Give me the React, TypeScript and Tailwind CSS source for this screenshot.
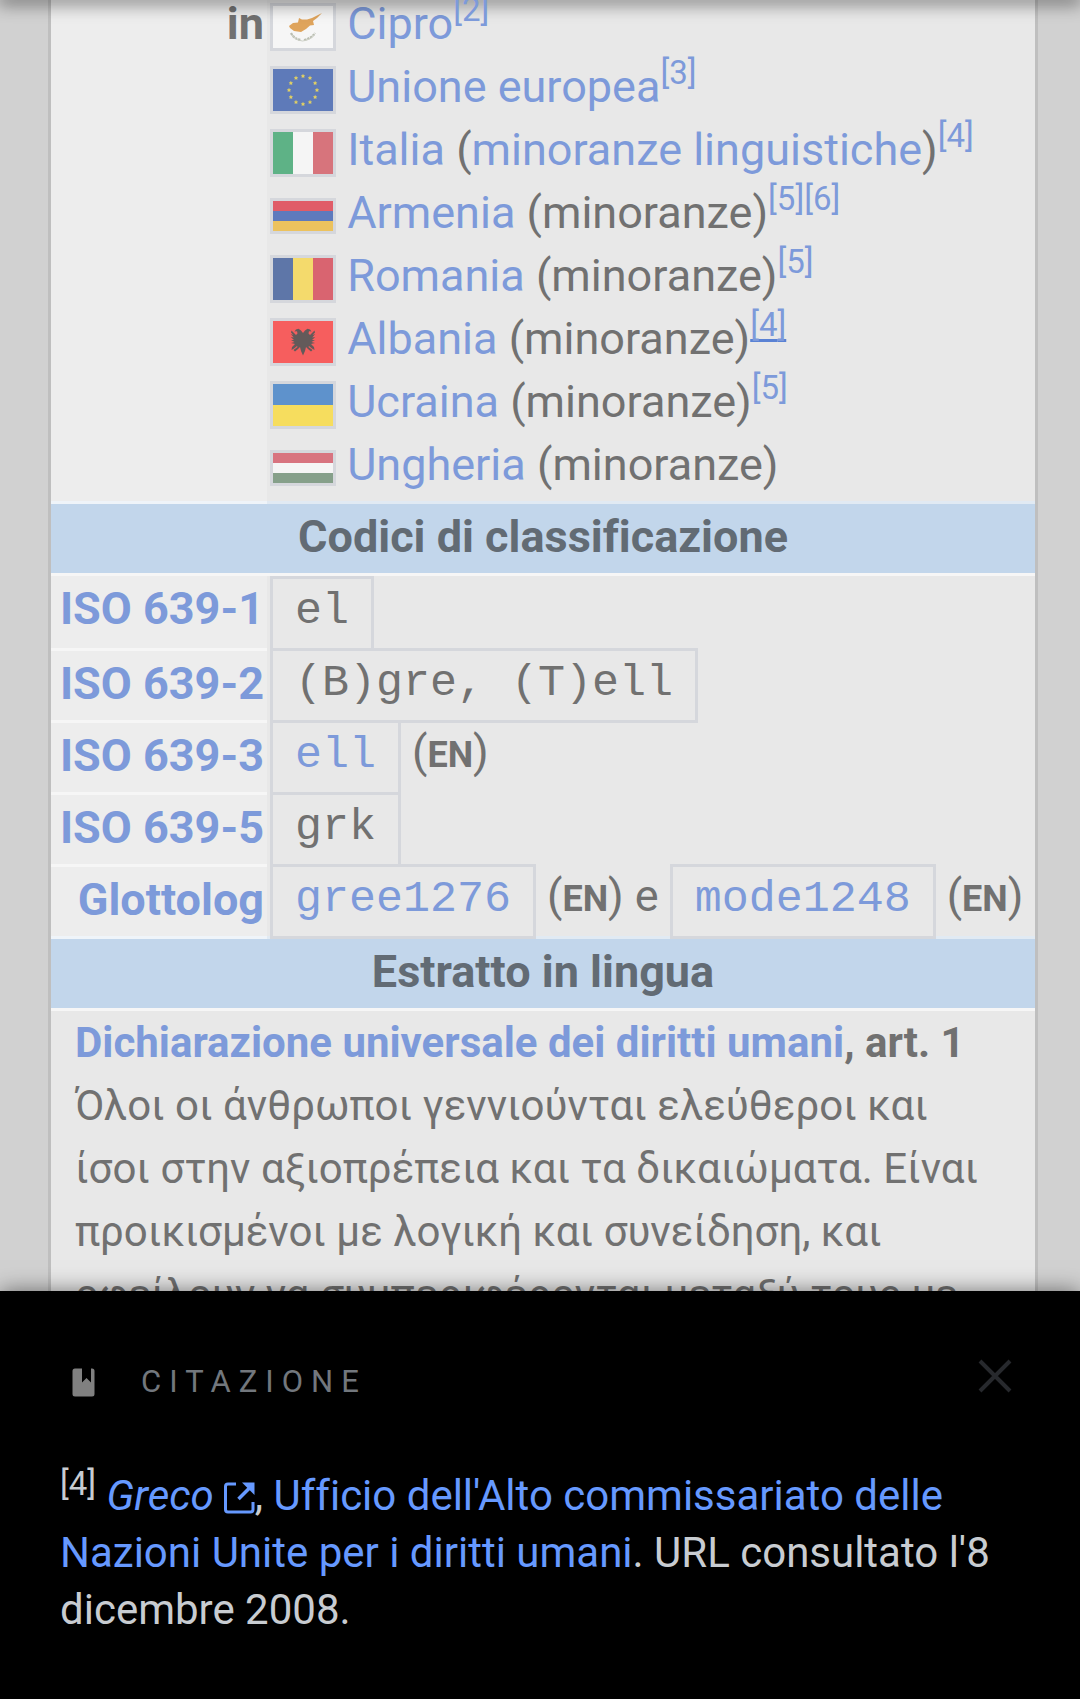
import type { ReactNode } from "react";

const sans = "font-['Roboto','Liberation_Sans',sans-serif] [font-variant-ligatures:none]";

function Frame({ tall = true, children }: { tall?: boolean; children: ReactNode }) {
  return (
    <span className="inline-block border-[3px] border-[#d5d7dc] align-middle leading-none">
      <svg
        className={tall ? "block h-[42px] w-[60px]" : "block h-[30px] w-[60px]"}
        viewBox={tall ? "0 0 60 42" : "0 0 60 30"}
        preserveAspectRatio="none"
        aria-hidden="true"
      >
        {children}
      </svg>
    </span>
  );
}

function Cyprus() {
  return (
    <Frame>
      <rect width="60" height="42" fill="#f6f6f6" />
      <path
        d="M16 20 L20 17 L25 16.5 L26 12 L29 13.5 L34 13.5 L39 12 L44 9.5 L49 7 L44 12 L40 15 L41 19 L37 19.5 L33 23 L28 26 L21 25 L17 22 Z"
        fill="#dfa45c"
      />
      <path d="M18 27 Q21 33 28 34 M31 34 Q39 32 42 27" stroke="#b9bdb0" strokeWidth="2.2" strokeDasharray="2.4 0.8" fill="none" />
      <path d="M19 29 Q22 34 29.500 35 Q38 34 41 29" stroke="#cdd0c6" strokeWidth="1" fill="none" />
    </Frame>
  );
}

function Europe() {
  const stars = Array.from({ length: 12 }, (_, i) => {
    const a = (i * Math.PI) / 6;
    return [30 + 14 * Math.sin(a), 21 - 14 * Math.cos(a)];
  });
  return (
    <Frame>
      <rect width="60" height="42" fill="#5e7ab9" />
      {stars.map(([x, y], i) => (
        <path key={i} transform={`translate(${x} ${y})`} d="M0 -2.300 L0.700 -0.700 L2.200 -0.600 L1.100 0.500 L1.400 2 L0 1.200 L-1.400 2 L-1.100 0.500 L-2.200 -0.600 L-0.700 -0.700 Z" fill="#e3d162" />
      ))}
    </Frame>
  );
}

function Vertical({ colors }: { colors: string[] }) {
  return (
    <Frame>
      {colors.map((c, i) => (
        <rect key={i} x={i * 20} width="20" height="42" fill={c} />
      ))}
    </Frame>
  );
}

function Horizontal({ colors, tall = false }: { colors: string[]; tall?: boolean }) {
  const h = (tall ? 42 : 30) / colors.length;
  return (
    <Frame tall={tall}>
      {colors.map((c, i) => (
        <rect key={i} y={i * h} width="60" height={h} fill={c} />
      ))}
    </Frame>
  );
}

function Albania() {
  const wing =
    "M30 12 L28 9.500 L25.500 7.800 L23 8.500 L21.500 10.500 L24 10.300 L24.500 12.500 L23 14 L18.500 9.500 L18 11.500 L20.500 14 L17.800 13 L20.800 16.500 L17.800 16 L21 19 L18 19 L21.500 21 L18 22 L22 23 L19 26 L18.500 29 L21 27.500 L24 25 L24.500 26 L20.500 29 L22 30.500 L25 28 L27 26 L28 30 L30 34.500 Z";
  return (
    <Frame>
      <rect width="60" height="42" fill="#f65e5e" />
      <path d={wing} fill="#635a5a" />
      <path d={wing} fill="#635a5a" transform="translate(60 0) scale(-1 1)" />
    </Frame>
  );
}

function Link({ children }: { children: ReactNode }) {
  return (
    <a href="#" className="text-[#7d9ada]">
      {children}
    </a>
  );
}

function Ref({ n, active = false }: { n: number; active?: boolean }) {
  return (
    <sup className="top-0 align-[18px] text-[33px]">
      <a
        href="#citazione"
        className={
          active
            ? "text-[#7d9ada] underline decoration-[#5a82d4] decoration-[3px] underline-offset-[3px] [text-decoration-skip-ink:none]"
            : "text-[#7d9ada]"
        }
      >
        [{n}]
      </a>
    </sup>
  );
}

const places: { flag: ReactNode; name: string; note?: ReactNode; refs: number[]; active?: boolean }[] = [
  { flag: <Cyprus />, name: "Cipro", refs: [2] },
  { flag: <Europe />, name: "Unione europea", refs: [3] },
  {
    flag: <Vertical colors={["#5eb286", "#f5f5f5", "#d7747c"]} />,
    name: "Italia",
    note: <Link>minoranze linguistiche</Link>,
    refs: [4],
  },
  { flag: <Horizontal colors={["#e05c68", "#5e7abd", "#ecc25e"]} />, name: "Armenia", note: "minoranze", refs: [5, 6] },
  { flag: <Vertical colors={["#5e76a8", "#f4da6c", "#d96470"]} />, name: "Romania", note: "minoranze", refs: [5] },
  { flag: <Albania />, name: "Albania", note: "minoranze", refs: [4], active: true },
  { flag: <Horizontal tall colors={["#5e92cc", "#f6dd5e"]} />, name: "Ucraina", note: "minoranze", refs: [5] },
  { flag: <Horizontal colors={["#d87480", "#f5f5f5", "#86a08a"]} />, name: "Ungheria", note: "minoranze", refs: [] },
];

function SectionHeader({ children }: { children: ReactNode }) {
  return (
    <tr>
      <th
        colSpan={2}
        className="border-b-[3px] border-[#f6f6f6] bg-[#c2d6eb] p-0 pb-[3px] text-center leading-[66px] font-bold text-[#626b74]"
      >
        {children}
      </th>
    </tr>
  );
}

function Code({ children }: { children: ReactNode }) {
  return (
    <code className="inline-block border-[3px] border-[#d5d7dc] px-[22px] pb-[3px] font-['Liberation_Mono',monospace] text-[45px] leading-[66px] whitespace-pre">
      {children}
    </code>
  );
}

function En() {
  return (
    <span className="leading-none">
      (<span className="text-[36px] font-bold">EN</span>)
    </span>
  );
}

function CodeRow({ label, first = false, last = false, children }: { label: string; first?: boolean; last?: boolean; children: ReactNode }) {
  return (
    <tr>
      <th
        scope="row"
        className={
          "border-b-[3px] bg-[#ededed] p-0 pr-[3px] pb-[3px] text-right align-top leading-[66px] font-bold whitespace-nowrap " +
          (last ? "border-[#eff4f9]" : "border-[#f6f6f6]")
        }
      >
        <Link>{label}</Link>
      </th>
      <td className={"p-0 pl-[3px] align-top " + (last ? "border-b-[3px] border-[#e1eaf3]" : "")}>
        <div
          className={
            "flex items-baseline gap-[11px] whitespace-nowrap " +
            (first ? "" : "-mt-[3px] ") +
            (last ? "-mb-[3px]" : "")
          }
        >
          {children}
        </div>
      </td>
    </tr>
  );
}

function ExternalIcon() {
  return (
    <svg className="ml-[10px] inline-block h-8 w-[31px] align-[-4px]" viewBox="0 0 31 32" fill="none" aria-hidden="true">
      <path d="M12 2 H4 Q1.500 2 1.500 4.500 V27.500 Q1.500 30 4 30 H26.500 Q29 30 29 27.500 V20" stroke="#6699ff" strokeWidth="3" />
      <path d="M14.500 17 L26 5.500" stroke="#6699ff" strokeWidth="3.500" />
      <path d="M18 0.500 H30.500 V13 Z" fill="#6699ff" />
    </svg>
  );
}

export default function App() {
  return (
    <div className={`flex h-screen flex-col overflow-hidden bg-[#d1d1d1] text-[45px] text-[#717171] ${sans}`}>
      <main className="relative min-h-0 flex-1 overflow-hidden pr-[42px] pl-12">
        <div className="absolute inset-x-0 -top-1 h-1 shadow-[0_0_18px_2px_rgba(0,0,0,0.75)]" />
        <div className="border-x-[3px] border-[#bfbfbf] bg-[#e8e8e8]">
          <table className="-mt-2 w-full border-separate border-spacing-0">
            <tbody>
              <tr>
                <th
                  scope="row"
                  className="w-[216px] border-b-[3px] border-[#eff4f9] bg-[#ededed] p-0 pr-[3px] text-right align-top leading-[63px] font-bold"
                >
                  in
                </th>
                <td className="border-b-[3px] border-[#e1eaf3] p-0 pb-[5px] pl-[3px] align-top leading-[63px]">
                  {places.map((p) => (
                    <div key={p.name} className="h-[63px] whitespace-nowrap">
                      {p.flag} <Link>{p.name}</Link>
                      {p.note && <> ({p.note})</>}
                      {p.refs.map((n) => (
                        <Ref key={n} n={n} active={p.active} />
                      ))}
                    </div>
                  ))}
                </td>
              </tr>
              <SectionHeader>Codici di classificazione</SectionHeader>
              <CodeRow label="ISO 639-1" first>
                <Code>el</Code>
              </CodeRow>
              <CodeRow label="ISO 639-2">
                <Code>(B)gre, (T)ell</Code>
              </CodeRow>
              <CodeRow label="ISO 639-3">
                <Code>
                  <Link>ell</Link>
                </Code>
                <En />
              </CodeRow>
              <CodeRow label="ISO 639-5">
                <Code>grk</Code>
              </CodeRow>
              <CodeRow label="Glottolog" last>
                <Code>
                  <Link>gree1276</Link>
                </Code>
                <En />
                <span className="leading-none">e</span>
                <Code>
                  <Link>mode1248</Link>
                </Code>
                <En />
              </CodeRow>
              <SectionHeader>Estratto in lingua</SectionHeader>
              <tr>
                <td colSpan={2} className="p-0 px-6 text-[42px] leading-[63px]">
                  <p className="font-bold">
                    <Link>Dichiarazione universale dei diritti umani</Link>, art. 1
                  </p>
                  <p lang="el">
                    Όλοι οι άνθρωποι γεννιούνται ελεύθεροι και
                    <br />
                    ίσοι στην αξιοπρέπεια και τα δικαιώματα. Είναι
                    <br />
                    προικισμένοι με λογική και συνείδηση, και
                    <br />
                    οφείλουν να συμπεριφέρονται μεταξύ τους με
                  </p>
                </td>
              </tr>
            </tbody>
          </table>
        </div>
      </main>

      <section id="citazione" aria-label="Citazione" className="relative bg-black px-[60px] pt-[60px] pb-[61px] shadow-[0_0_21px_rgba(0,0,0,0.5)]">
        <header className="flex items-center justify-between">
          <div className="flex items-center pt-3 pl-3">
            <svg className="h-[29px] w-[23px]" viewBox="0 0 23 29" aria-hidden="true">
              <path
                d="M3 0.500 H10 V14.500 L14.500 10 L19 14.500 V0.500 H20 Q22.500 0.500 22.500 3 V26 Q22.500 28.500 20 28.500 H3 Q0.500 28.500 0.500 26 V3 Q0.500 0.500 3 0.500 Z"
                fill="#808080"
              />
            </svg>
            <h2 className="ml-[46px] text-[31px] leading-9 tracking-[8px] text-[#72777d] uppercase">Citazione</h2>
          </div>
          <button type="button" aria-label="Chiudi" className="p-2">
            <svg className="h-[34px] w-[34px]" viewBox="0 0 34 34" aria-hidden="true">
              <path d="M2 2 L32 32 M32 2 L2 32" stroke="#27292d" strokeWidth="4" />
            </svg>
          </button>
        </header>
        <p className="pt-[66px] text-[42px] leading-[57px] text-[#c8ccd1]">
          <sup className="top-0 align-[15px] text-[33px]">[4]</sup>{" "}
          <a href="#" className="text-[#6699ff]">
            <i>Greco</i>
            <ExternalIcon />
          </a>
          ,{" "}
          <a href="#" className="text-[#6699ff]">
            Ufficio dell'Alto commissariato delle Nazioni Unite per i diritti umani
          </a>
          . URL consultato l'8 dicembre 2008.
        </p>
      </section>
    </div>
  );
}
